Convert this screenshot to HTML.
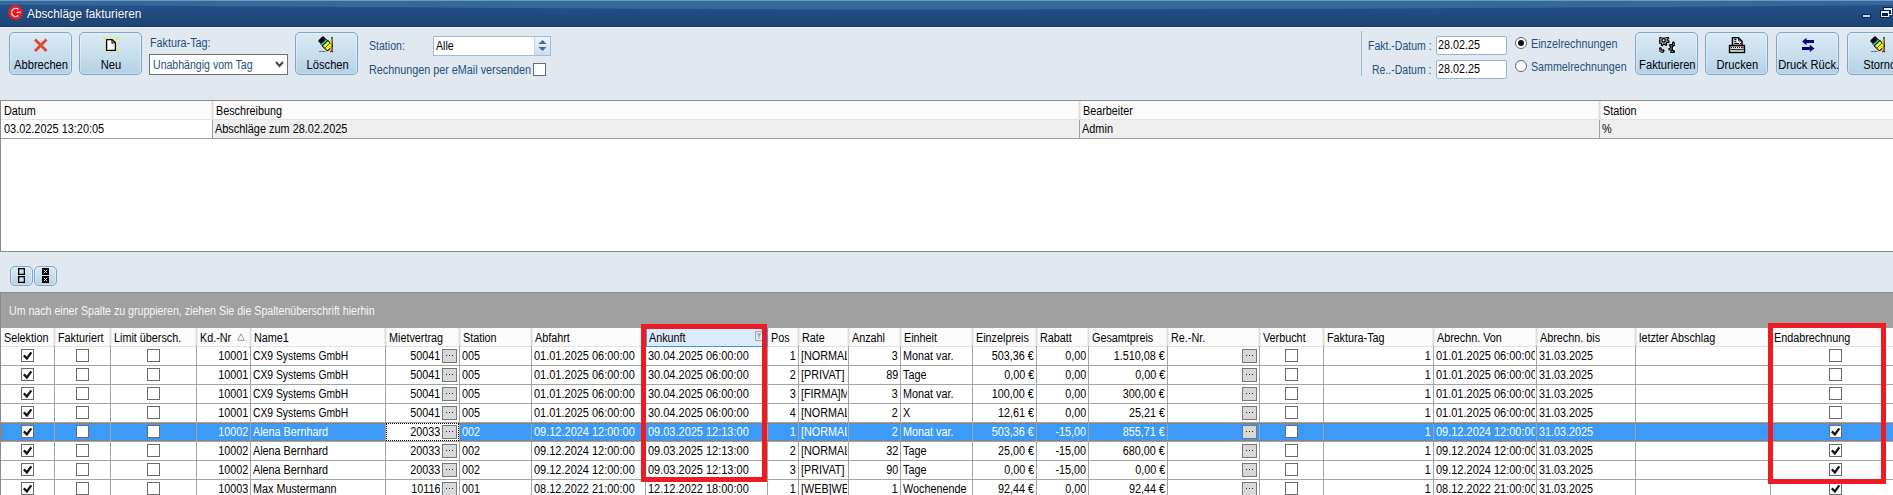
<!DOCTYPE html><html><head><meta charset="utf-8"><title>Abschläge fakturieren</title><style>
*{margin:0;padding:0;box-sizing:border-box}
html,body{width:1893px;height:495px;overflow:hidden;background:#e2e8f0;font-family:"Liberation Sans",sans-serif;font-size:12px;color:#000;position:relative}
.a{position:absolute}
.t{position:absolute;white-space:nowrap;line-height:14px;transform-origin:0 0}
.btn{position:absolute;border:1px solid #7ea6c8;border-radius:5px;background:linear-gradient(#dbeaf4,#c9dfed 50%,#b4d0e5);box-shadow:inset 0 0 0 1px rgba(255,255,255,0.35)}
.lbl{position:absolute;left:-9px;right:-11px;text-align:center;top:25px;line-height:14px;white-space:nowrap}
.lbl span{display:inline-block;transform:scaleX(0.93)}
.cb{position:absolute;width:13px;height:13px;border:1px solid #6b6b6b;background:#fff}
.cb svg{position:absolute;left:0;top:0}
.dots{position:absolute;width:15px;height:14px;border:1px solid #767676;background:#d8d8d8}
.dots:after{content:"";position:absolute;left:3px;top:5px;width:7px;height:1px;background:repeating-linear-gradient(90deg,#222 0 1px,transparent 1px 3px)}
.cell{position:absolute;overflow:hidden;white-space:nowrap;line-height:14px;height:19px;padding-top:3px}
.cell span{display:inline-block;transform:scaleX(0.9);transform-origin:0 0}
.cell.r{text-align:right}
.cell.r span{transform-origin:100% 0}
</style></head><body>
<svg class="a" style="left:0;top:0" width="1893" height="27" viewBox="0 0 1893 27"><defs><linearGradient id="tb" x1="0" y1="0" x2="0" y2="1"><stop offset="0" stop-color="#285592"/><stop offset="0.35" stop-color="#234e86"/><stop offset="0.93" stop-color="#1c4474"/><stop offset="1" stop-color="#143868"/></linearGradient></defs><rect width="1893" height="27" fill="url(#tb)"/><path d="M0 0 H1893 V5 C1600 7.5 1250 9.5 950 9.5 C650 9.5 350 6.5 0 5 Z" fill="#37689a"/><rect width="1893" height="1" fill="#6b9bc3"/></svg>
<div class="a" style="left:0;top:27px;width:1893px;height:1px;background:#eaf0f6"></div>
<svg class="a" style="left:0px;top:0px" width="24" height="24" viewBox="0 0 24 24"><circle cx="15.4" cy="12.4" r="7.4" fill="#e81c24"/><path d="M18.4 9.4 A4.1 4.1 0 1 0 18.4 15.6" fill="none" stroke="#fff" stroke-width="1.3"/><path d="M16.8 12.4 H20.6" stroke="#fff" stroke-width="1.2"/></svg>
<div class="t" style="left:27px;top:7px;color:#fff;font-size:12px;transform:scaleX(0.985);text-shadow:0 0 1px #0a2040">Abschläge fakturieren</div>
<svg class="a" style="left:1858px;top:4px" width="35" height="18" viewBox="0 0 35 18"><rect x="4" y="10" width="9" height="4" fill="#0a1e3c" opacity="0.7"/><rect x="5" y="11" width="7" height="2" fill="#bcdcf2"/><rect x="25" y="3" width="9" height="8" fill="#0a1e3c"/><rect x="26" y="4" width="8" height="7" fill="#d8ecfa"/><rect x="27" y="6" width="6" height="4" fill="#0a1a44"/><rect x="22" y="6" width="9" height="8" fill="#0a1e3c"/><rect x="23" y="7" width="8" height="6" fill="#e4f2fc"/><rect x="24" y="9" width="6" height="3" fill="#0a1a44"/></svg>
<div class="btn" style="left:9px;top:32px;width:63px;height:43px"><div class="lbl"><span>Abbrechen</span></div></div>
<div class="btn" style="left:79px;top:32px;width:63px;height:43px"><div class="lbl"><span>Neu</span></div></div>
<div class="btn" style="left:295px;top:32px;width:63px;height:43px"><div class="lbl"><span>Löschen</span></div></div>
<div class="btn" style="left:1635px;top:32px;width:63px;height:43px"><div class="lbl"><span>Fakturieren</span></div></div>
<div class="btn" style="left:1705px;top:32px;width:63px;height:43px"><div class="lbl"><span>Drucken</span></div></div>
<div class="btn" style="left:1776px;top:32px;width:63px;height:43px"><div class="lbl"><span>Druck Rück.</span></div></div>
<div class="btn" style="left:1847px;top:32px;width:63px;height:43px"><div class="lbl"><span>Storno</span></div></div>
<svg class="a" style="left:28px;top:34px" width="24" height="24" viewBox="0 0 24 24"><path d="M7 5.5 L18.5 17 M18.5 5.5 L7 17" stroke="#dc4a32" stroke-width="2.9"/></svg>
<svg class="a" style="left:97px;top:34px" width="24" height="24" viewBox="0 0 24 24"><g stroke="#f5ee00" stroke-width="1.1"><path d="M6 3 L8.5 5.5 M13.5 3 V5 M21.5 3 L18 6.5 M6 11.5 H8.5 M19.5 11 H22 M6.5 18 L9 16 M14 17.5 V19.5 M19.5 16 L22 18.5"/></g><path d="M9.6 5.6 H15.2 L18.4 8.8 V16.4 H9.6 Z" fill="#fff" stroke="#000" stroke-width="1.3" stroke-linejoin="round"/><path d="M15 5.8 V9 H18.2" fill="none" stroke="#000" stroke-width="1.1"/></svg>
<svg class="a" style="left:312px;top:34px" width="24" height="24" viewBox="0 0 24 24"><path d="M7 17.5 H13.5" stroke="#7a7a7a" stroke-width="1"/><rect x="14.5" y="17" width="1" height="1" fill="#999"/><rect x="21.5" y="17" width="1" height="1" fill="#999"/><g transform="translate(10.2 6.2) rotate(45)"><rect x="-2.6" y="-3.6" width="4.6" height="7.2" rx="1" fill="#000"/><rect x="2" y="-3.6" width="2.2" height="7.2" fill="#00e0f0" stroke="#000" stroke-width="0.6"/><path d="M4.2 -3.8 H9.5 Q11.5 -3.8 11.5 -1.5 V1.8 Q11.5 4 9.5 4 H4.2 Z" fill="#f6f200" stroke="#000" stroke-width="1"/><path d="M6 -2 H10 M6 0 H10.5 M6 2 H10" stroke="#fff" stroke-width="0.7" stroke-dasharray="0.8 0.8"/><path d="M7.5 -3.5 V3.5" stroke="#000" stroke-width="0.7"/></g><path d="M20 3 V17" stroke="#000" stroke-width="1.2"/><path d="M19 5 V15.5" stroke="#f6f200" stroke-width="1"/><rect x="18" y="16.8" width="3" height="1.5" fill="#f00010"/></svg>
<svg class="a" style="left:1864px;top:34px" width="24" height="24" viewBox="0 0 24 24"><path d="M7 17.5 H13.5" stroke="#7a7a7a" stroke-width="1"/><rect x="14.5" y="17" width="1" height="1" fill="#999"/><rect x="21.5" y="17" width="1" height="1" fill="#999"/><g transform="translate(10.2 6.2) rotate(45)"><rect x="-2.6" y="-3.6" width="4.6" height="7.2" rx="1" fill="#000"/><rect x="2" y="-3.6" width="2.2" height="7.2" fill="#00e0f0" stroke="#000" stroke-width="0.6"/><path d="M4.2 -3.8 H9.5 Q11.5 -3.8 11.5 -1.5 V1.8 Q11.5 4 9.5 4 H4.2 Z" fill="#f6f200" stroke="#000" stroke-width="1"/><path d="M6 -2 H10 M6 0 H10.5 M6 2 H10" stroke="#fff" stroke-width="0.7" stroke-dasharray="0.8 0.8"/><path d="M7.5 -3.5 V3.5" stroke="#000" stroke-width="0.7"/></g><path d="M20 3 V17" stroke="#000" stroke-width="1.2"/><path d="M19 5 V15.5" stroke="#f6f200" stroke-width="1"/><rect x="18" y="16.8" width="3" height="1.5" fill="#f00010"/></svg>
<svg class="a" style="left:1655px;top:34px" width="24" height="24" viewBox="0 0 24 24"><defs><clipPath id="gc"><rect x="4" y="3" width="16" height="16"/></clipPath></defs><g clip-path="url(#gc)"><polygon points="14.09,7.31 13.77,8.36 11.92,8.43 11.42,9.04 11.69,10.87 10.72,11.38 9.37,10.13 8.59,10.20 7.49,11.69 6.44,11.37 6.37,9.52 5.76,9.02 3.93,9.29 3.42,8.32 4.67,6.97 4.60,6.19 3.11,5.09 3.43,4.04 5.28,3.97 5.78,3.36 5.51,1.53 6.48,1.02 7.83,2.27 8.61,2.20 9.71,0.71 10.76,1.03 10.83,2.88 11.44,3.38 13.27,3.11 13.78,4.08 12.53,5.43 12.60,6.21" fill="#8c8c8c" stroke="#000" stroke-width="1.1"/><circle cx="8.6" cy="6.2" r="1.6" fill="#fff" stroke="#000" stroke-width="1.2"/><polygon points="26.57,14.84 26.36,15.94 24.34,16.20 23.93,16.89 24.67,18.78 23.80,19.49 22.09,18.39 21.33,18.66 20.68,20.58 19.56,20.57 18.95,18.63 18.20,18.34 16.46,19.40 15.62,18.67 16.40,16.79 16.01,16.09 14.00,15.78 13.82,14.68 15.62,13.74 15.77,12.95 14.43,11.42 15.00,10.46 16.99,10.91 17.61,10.40 17.57,8.37 18.62,8.00 19.86,9.61 20.66,9.62 21.94,8.04 22.98,8.43 22.89,10.47 23.49,10.99 25.49,10.60 26.03,11.57 24.66,13.07 24.79,13.86" fill="#8c8c8c" stroke="#000" stroke-width="1.1"/><circle cx="20.2" cy="14.2" r="3" fill="#fff" stroke="#000" stroke-width="1.4"/><polygon points="9.19,20.02 8.75,21.00 7.09,20.91 6.51,21.41 6.35,23.07 5.31,23.35 4.34,21.99 3.60,21.85 2.20,22.75 1.33,22.12 1.79,20.51 1.43,19.84 -0.15,19.31 -0.19,18.24 1.35,17.60 1.66,16.90 1.08,15.33 1.90,14.63 3.36,15.43 4.10,15.24 4.96,13.81 6.02,14.01 6.30,15.66 6.91,16.11 8.57,15.90 9.07,16.85 7.96,18.10 7.99,18.86" fill="#8c8c8c" stroke="#000" stroke-width="1.1"/><circle cx="4.6" cy="18.6" r="1.5" fill="#fff" stroke="#000" stroke-width="1"/></g></svg>
<svg class="a" style="left:1725px;top:34px" width="24" height="24" viewBox="0 0 24 24"><path d="M7.5 3.7 H13.5 L17 7.2 V11.5 H7.5 Z" fill="#fff" stroke="#000" stroke-width="1.5"/><path d="M13.5 4 V6.5 Q13.5 7 14 7 H16.5" fill="none" stroke="#000" stroke-width="0.9"/><rect x="9.2" y="5" width="2.2" height="1.3" fill="#000"/><rect x="9.2" y="7.2" width="2.2" height="1.1" fill="#000"/><rect x="9.2" y="9" width="5" height="1.1" fill="#000"/><rect x="15" y="9" width="1.1" height="1.1" fill="#000"/><rect x="4.6" y="11.6" width="14.8" height="6.8" fill="#fff" stroke="#000" stroke-width="1.6"/><path d="M6 13.5 H17" stroke="#000" stroke-width="1" stroke-dasharray="1 1"/><path d="M5.5 12.5 H17 M5.5 14.5 H17" stroke="#777" stroke-width="0.6" stroke-dasharray="1 1" stroke-dashoffset="1"/><circle cx="17.6" cy="13.6" r="0.9" fill="#f00"/><rect x="5.4" y="15" width="13.2" height="0.9" fill="#000"/><rect x="5.4" y="15.9" width="13.2" height="1.8" fill="#c4c4c4"/></svg>
<svg class="a" style="left:1796px;top:34px" width="24" height="24" viewBox="0 0 24 24"><path d="M6 7.5 L10.5 3.8 V6 H18 V9 H10.5 V11.2 Z" fill="#000080"/><path d="M18.5 14.5 L13.8 10.8 V13 H6 V16 H13.8 V18 Z" fill="#000080"/></svg>
<div class="t" style="left:150px;top:36px;color:#24507e;font-size:12px;transform:scaleX(0.9);">Faktura-Tag:</div>
<div class="a" style="left:149px;top:54px;width:139px;height:21px;border:1px solid #6f6f6f;background:#fff"></div>
<div class="t" style="left:153px;top:58px;color:#24507e;font-size:12px;transform:scaleX(0.88);">Unabhängig vom Tag</div>
<svg class="a" style="left:275px;top:61px" width="9" height="7" viewBox="0 0 9 7"><path d="M1 1 L4.5 5 L8 1" fill="none" stroke="#444" stroke-width="2"/></svg>
<div class="t" style="left:369px;top:39px;color:#24507e;font-size:12px;transform:scaleX(0.88);">Station:</div>
<div class="a" style="left:433px;top:36px;width:118px;height:20px;border:1px solid #9dbcd9;background:#fff"></div>
<div class="a" style="left:534px;top:37px;width:16px;height:18px;background:linear-gradient(#eef3f8,#cfdce8);border-left:1px solid #c8d6e4"></div>
<svg class="a" style="left:538px;top:39px" width="9" height="13" viewBox="0 0 9 13"><path d="M0.5 5 L4.5 1 L8.5 5 Z M0.5 8 L4.5 12 L8.5 8 Z" fill="#3c6da0"/></svg>
<div class="t" style="left:436px;top:39px;color:#000;font-size:12px;transform:scaleX(0.88);">Alle</div>
<div class="t" style="left:369px;top:63px;color:#24507e;font-size:12px;transform:scaleX(0.9);">Rechnungen per eMail versenden</div>
<div class="cb" style="left:533px;top:63px"></div>
<div class="a" style="left:1361px;top:31px;width:1px;height:45px;background:#a7b8cc"></div>
<div class="t" style="left:1368px;top:39px;color:#24507e;font-size:12px;transform:scaleX(0.875);">Fakt.-Datum :</div>
<div class="t" style="left:1372px;top:63px;color:#24507e;font-size:12px;transform:scaleX(0.875);">Re..-Datum :</div>
<div class="a" style="left:1436px;top:36px;width:71px;height:19px;border:1px solid #93b5d3;border-radius:2px;background:#fff"></div>
<div class="t" style="left:1438px;top:38px;color:#000;font-size:12px;transform:scaleX(0.9);">28.02.25</div>
<div class="a" style="left:1436px;top:60px;width:71px;height:19px;border:1px solid #93b5d3;border-radius:2px;background:#fff"></div>
<div class="t" style="left:1438px;top:62px;color:#000;font-size:12px;transform:scaleX(0.9);">28.02.25</div>
<div class="a" style="left:1515px;top:37px;width:12px;height:12px;border-radius:50%;border:1px solid #666;background:#fff"></div>
<div class="a" style="left:1518px;top:40px;width:6px;height:6px;border-radius:50%;background:#111"></div>
<div class="a" style="left:1515px;top:60px;width:12px;height:12px;border-radius:50%;border:1px solid #666;background:#fff"></div>
<div class="t" style="left:1531px;top:37px;color:#24507e;font-size:12px;transform:scaleX(0.9);">Einzelrechnungen</div>
<div class="t" style="left:1531px;top:60px;color:#24507e;font-size:12px;transform:scaleX(0.89);">Sammelrechnungen</div>
<div class="a" style="left:0;top:100px;width:1893px;height:152px;background:#fff;border-top:1px solid #8c8c8c;border-left:1px solid #8c8c8c;border-bottom:1px solid #8c8c8c"></div>
<div class="a" style="left:1px;top:101px;width:1892px;height:19px;background:#fbfbfb;border-bottom:1px solid #e2e2e2"></div>
<div class="a" style="left:1px;top:119px;width:1892px;height:20px;border-bottom:1px solid #a0a0a0"></div>
<div class="t" style="left:4px;top:104px;color:#000;font-size:12px;transform:scaleX(0.9);">Datum</div>
<div class="t" style="left:4px;top:122px;color:#000;font-size:12px;transform:scaleX(0.91);">03.02.2025 13:20:05</div>
<div class="a" style="left:211px;top:101px;width:3px;height:18px;background:linear-gradient(90deg,#f3f3f3,#dedede 50%,#f3f3f3)"></div>
<div class="a" style="left:213px;top:120px;width:866px;height:18px;background:#efefef"></div>
<div class="a" style="left:212px;top:120px;width:1px;height:18px;background:#a0a0a0"></div>
<div class="t" style="left:216px;top:104px;color:#000;font-size:12px;transform:scaleX(0.9);">Beschreibung</div>
<div class="t" style="left:215px;top:122px;color:#000;font-size:12px;transform:scaleX(0.91);">Abschläge zum 28.02.2025</div>
<div class="a" style="left:1078px;top:101px;width:3px;height:18px;background:linear-gradient(90deg,#f3f3f3,#dedede 50%,#f3f3f3)"></div>
<div class="a" style="left:1080px;top:120px;width:519px;height:18px;background:#efefef"></div>
<div class="a" style="left:1079px;top:120px;width:1px;height:18px;background:#a0a0a0"></div>
<div class="t" style="left:1083px;top:104px;color:#000;font-size:12px;transform:scaleX(0.9);">Bearbeiter</div>
<div class="t" style="left:1082px;top:122px;color:#000;font-size:12px;transform:scaleX(0.91);">Admin</div>
<div class="a" style="left:1598px;top:101px;width:3px;height:18px;background:linear-gradient(90deg,#f3f3f3,#dedede 50%,#f3f3f3)"></div>
<div class="a" style="left:1600px;top:120px;width:293px;height:18px;background:#efefef"></div>
<div class="a" style="left:1599px;top:120px;width:1px;height:18px;background:#a0a0a0"></div>
<div class="t" style="left:1603px;top:104px;color:#000;font-size:12px;transform:scaleX(0.9);">Station</div>
<div class="t" style="left:1602px;top:122px;color:#000;font-size:12px;transform:scaleX(0.91);">%</div>
<div class="btn" style="left:10px;top:266px;width:23px;height:20px;border-radius:5px"></div>
<svg class="a" style="left:18px;top:268px" width="7" height="7" viewBox="0 0 7 7"><rect x="0.65" y="0.65" width="5.7" height="5.7" fill="#d2e5f1" stroke="#000" stroke-width="1.3"/></svg>
<svg class="a" style="left:18px;top:276px" width="7" height="7" viewBox="0 0 7 7"><rect x="0.65" y="0.65" width="5.7" height="5.7" fill="#d2e5f1" stroke="#000" stroke-width="1.3"/></svg>
<div class="btn" style="left:34px;top:266px;width:23px;height:20px;border-radius:5px"></div>
<svg class="a" style="left:42px;top:268px" width="7" height="7" viewBox="0 0 7 7"><rect width="7" height="7" fill="#000"/><path d="M1.8 1.8 L5.2 5.2 M5.2 1.8 L1.8 5.2" stroke="#fff" stroke-width="0.9"/></svg>
<svg class="a" style="left:42px;top:276px" width="7" height="7" viewBox="0 0 7 7"><rect width="7" height="7" fill="#000"/><path d="M1.8 1.8 L5.2 5.2 M5.2 1.8 L1.8 5.2" stroke="#fff" stroke-width="0.9"/></svg>
<div class="a" style="left:0;top:292px;width:1893px;height:36px;background:#a0a0a0;border-top:1px solid #8a8a8a;border-left:1px solid #8a8a8a"></div>
<div class="t" style="left:9px;top:304px;color:#f6f6f6;font-size:12px;transform:scaleX(0.884);">Um nach einer Spalte zu gruppieren, ziehen Sie die Spaltenüberschrift hierhin</div>
<div class="a" style="left:0;top:328px;width:1893px;height:167px;background:#fff;border-left:1px solid #8a8a8a"></div>
<div class="a" style="left:1px;top:328px;width:1892px;height:19px;background:#fbfbfb;border-bottom:1px solid #e2e2e2"></div>
<div class="cell" style="left:4px;top:329px;width:49px;padding-top:2px"><span>Selektion</span></div>
<div class="a" style="left:53px;top:328px;width:3px;height:18px;background:linear-gradient(90deg,#f3f3f3,#dedede 50%,#f3f3f3)"></div>
<div class="cell" style="left:58px;top:329px;width:51px;padding-top:2px"><span>Fakturiert</span></div>
<div class="a" style="left:109px;top:328px;width:3px;height:18px;background:linear-gradient(90deg,#f3f3f3,#dedede 50%,#f3f3f3)"></div>
<div class="cell" style="left:114px;top:329px;width:81px;padding-top:2px"><span>Limit übersch.</span></div>
<div class="a" style="left:195px;top:328px;width:3px;height:18px;background:linear-gradient(90deg,#f3f3f3,#dedede 50%,#f3f3f3)"></div>
<div class="cell" style="left:200px;top:329px;width:49px;padding-top:2px"><span>Kd.-Nr</span></div>
<svg class="a" style="left:237px;top:333px" width="8" height="8" viewBox="0 0 8 8"><path d="M4 0.8 L7.3 7.3 H0.7 Z" fill="none" stroke="#9a9a9a" stroke-width="1"/></svg>
<div class="a" style="left:249px;top:328px;width:3px;height:18px;background:linear-gradient(90deg,#f3f3f3,#dedede 50%,#f3f3f3)"></div>
<div class="cell" style="left:254px;top:329px;width:130px;padding-top:2px"><span>Name1</span></div>
<div class="a" style="left:384px;top:328px;width:3px;height:18px;background:linear-gradient(90deg,#f3f3f3,#dedede 50%,#f3f3f3)"></div>
<div class="cell" style="left:389px;top:329px;width:69px;padding-top:2px"><span>Mietvertrag</span></div>
<div class="a" style="left:458px;top:328px;width:3px;height:18px;background:linear-gradient(90deg,#f3f3f3,#dedede 50%,#f3f3f3)"></div>
<div class="cell" style="left:463px;top:329px;width:67px;padding-top:2px"><span>Station</span></div>
<div class="a" style="left:530px;top:328px;width:3px;height:18px;background:linear-gradient(90deg,#f3f3f3,#dedede 50%,#f3f3f3)"></div>
<div class="cell" style="left:535px;top:329px;width:109px;padding-top:2px"><span>Abfahrt</span></div>
<div class="a" style="left:644px;top:328px;width:3px;height:18px;background:linear-gradient(90deg,#f3f3f3,#dedede 50%,#f3f3f3)"></div>
<div class="a" style="left:646px;top:328px;width:121px;height:19px;background:#dcebfc;border:1px solid #3a9ae6;border-top:none"></div>
<svg class="a" style="left:755px;top:331px" width="8" height="10" viewBox="0 0 8 10"><rect x="0.5" y="0.5" width="7" height="9" fill="none" stroke="#a8a8a8"/><path d="M2 2.5 H6.5 L4.5 5 V8 L3.5 7.5 V5 Z" fill="#9a9a9a"/></svg>
<div class="cell" style="left:649px;top:329px;width:117px;padding-top:2px"><span>Ankunft</span></div>
<div class="a" style="left:766px;top:328px;width:3px;height:18px;background:linear-gradient(90deg,#f3f3f3,#dedede 50%,#f3f3f3)"></div>
<div class="cell" style="left:771px;top:329px;width:26px;padding-top:2px"><span>Pos</span></div>
<div class="a" style="left:797px;top:328px;width:3px;height:18px;background:linear-gradient(90deg,#f3f3f3,#dedede 50%,#f3f3f3)"></div>
<div class="cell" style="left:802px;top:329px;width:45px;padding-top:2px"><span>Rate</span></div>
<div class="a" style="left:847px;top:328px;width:3px;height:18px;background:linear-gradient(90deg,#f3f3f3,#dedede 50%,#f3f3f3)"></div>
<div class="cell" style="left:852px;top:329px;width:47px;padding-top:2px"><span>Anzahl</span></div>
<div class="a" style="left:899px;top:328px;width:3px;height:18px;background:linear-gradient(90deg,#f3f3f3,#dedede 50%,#f3f3f3)"></div>
<div class="cell" style="left:904px;top:329px;width:67px;padding-top:2px"><span>Einheit</span></div>
<div class="a" style="left:971px;top:328px;width:3px;height:18px;background:linear-gradient(90deg,#f3f3f3,#dedede 50%,#f3f3f3)"></div>
<div class="cell" style="left:976px;top:329px;width:59px;padding-top:2px"><span>Einzelpreis</span></div>
<div class="a" style="left:1035px;top:328px;width:3px;height:18px;background:linear-gradient(90deg,#f3f3f3,#dedede 50%,#f3f3f3)"></div>
<div class="cell" style="left:1040px;top:329px;width:47px;padding-top:2px"><span>Rabatt</span></div>
<div class="a" style="left:1087px;top:328px;width:3px;height:18px;background:linear-gradient(90deg,#f3f3f3,#dedede 50%,#f3f3f3)"></div>
<div class="cell" style="left:1092px;top:329px;width:74px;padding-top:2px"><span>Gesamtpreis</span></div>
<div class="a" style="left:1166px;top:328px;width:3px;height:18px;background:linear-gradient(90deg,#f3f3f3,#dedede 50%,#f3f3f3)"></div>
<div class="cell" style="left:1171px;top:329px;width:87px;padding-top:2px"><span>Re.-Nr.</span></div>
<div class="a" style="left:1258px;top:328px;width:3px;height:18px;background:linear-gradient(90deg,#f3f3f3,#dedede 50%,#f3f3f3)"></div>
<div class="cell" style="left:1263px;top:329px;width:59px;padding-top:2px"><span>Verbucht</span></div>
<div class="a" style="left:1322px;top:328px;width:3px;height:18px;background:linear-gradient(90deg,#f3f3f3,#dedede 50%,#f3f3f3)"></div>
<div class="cell" style="left:1327px;top:329px;width:105px;padding-top:2px"><span>Faktura-Tag</span></div>
<div class="a" style="left:1432px;top:328px;width:3px;height:18px;background:linear-gradient(90deg,#f3f3f3,#dedede 50%,#f3f3f3)"></div>
<div class="cell" style="left:1437px;top:329px;width:98px;padding-top:2px"><span>Abrechn. Von</span></div>
<div class="a" style="left:1535px;top:328px;width:3px;height:18px;background:linear-gradient(90deg,#f3f3f3,#dedede 50%,#f3f3f3)"></div>
<div class="cell" style="left:1540px;top:329px;width:94px;padding-top:2px"><span>Abrechn. bis</span></div>
<div class="a" style="left:1634px;top:328px;width:3px;height:18px;background:linear-gradient(90deg,#f3f3f3,#dedede 50%,#f3f3f3)"></div>
<div class="cell" style="left:1639px;top:329px;width:130px;padding-top:2px"><span>letzter Abschlag</span></div>
<div class="a" style="left:1769px;top:328px;width:3px;height:18px;background:linear-gradient(90deg,#f3f3f3,#dedede 50%,#f3f3f3)"></div>
<div class="cell" style="left:1774px;top:329px;width:126px;padding-top:2px"><span>Endabrechnung</span></div>
<div class="a" style="left:767px;top:328px;width:1px;height:19px;background:#3a9ae6"></div>
<div class="a" style="left:1px;top:365px;width:1892px;height:1px;background:#a4a4a4"></div>
<div class="cb" style="left:21px;top:349px"><svg width="11" height="11" viewBox="0 0 11 11"><path d="M1.8 5.4 L4.9 8.4 L9.3 2.4" fill="none" stroke="#141414" stroke-width="2.3"/></svg></div>
<div class="a" style="left:54px;top:346px;width:1px;height:20px;background:#a4a4a4"></div>
<div class="cb" style="left:76px;top:349px"></div>
<div class="a" style="left:110px;top:346px;width:1px;height:20px;background:#a4a4a4"></div>
<div class="cb" style="left:147px;top:349px"></div>
<div class="a" style="left:196px;top:346px;width:1px;height:20px;background:#a4a4a4"></div>
<div class="cell r" style="left:197px;top:346px;width:51px;color:#000"><span>10001</span></div>
<div class="a" style="left:250px;top:346px;width:1px;height:20px;background:#a4a4a4"></div>
<div class="cell" style="left:253px;top:346px;width:131px;color:#000"><span style="transform:scaleX(0.86)">CX9 Systems GmbH</span></div>
<div class="a" style="left:385px;top:346px;width:1px;height:20px;background:#a4a4a4"></div>
<div class="cell r" style="left:386px;top:346px;width:54px;color:#000"><span>50041</span></div>
<div class="dots" style="left:442px;top:349px"></div>
<div class="a" style="left:459px;top:346px;width:1px;height:20px;background:#a4a4a4"></div>
<div class="cell" style="left:462px;top:346px;width:68px;color:#000"><span>005</span></div>
<div class="a" style="left:531px;top:346px;width:1px;height:20px;background:#a4a4a4"></div>
<div class="cell" style="left:534px;top:346px;width:110px;color:#000"><span style="transform:scaleX(0.915)">01.01.2025 06:00:00</span></div>
<div class="a" style="left:645px;top:346px;width:1px;height:20px;background:#a4a4a4"></div>
<div class="cell" style="left:648px;top:346px;width:118px;color:#000"><span style="transform:scaleX(0.915)">30.04.2025 06:00:00</span></div>
<div class="a" style="left:767px;top:346px;width:1px;height:20px;background:#a4a4a4"></div>
<div class="cell r" style="left:768px;top:346px;width:28px;color:#000"><span>1</span></div>
<div class="a" style="left:798px;top:346px;width:1px;height:20px;background:#a4a4a4"></div>
<div class="cell" style="left:801px;top:346px;width:46px;color:#000"><span>[NORMAL]</span></div>
<div class="a" style="left:848px;top:346px;width:1px;height:20px;background:#a4a4a4"></div>
<div class="cell r" style="left:849px;top:346px;width:49px;color:#000"><span>3</span></div>
<div class="a" style="left:900px;top:346px;width:1px;height:20px;background:#a4a4a4"></div>
<div class="cell" style="left:903px;top:346px;width:68px;color:#000"><span>Monat var.</span></div>
<div class="a" style="left:972px;top:346px;width:1px;height:20px;background:#a4a4a4"></div>
<div class="cell r" style="left:973px;top:346px;width:61px;color:#000"><span>503,36 €</span></div>
<div class="a" style="left:1036px;top:346px;width:1px;height:20px;background:#a4a4a4"></div>
<div class="cell r" style="left:1037px;top:346px;width:49px;color:#000"><span>0,00</span></div>
<div class="a" style="left:1088px;top:346px;width:1px;height:20px;background:#a4a4a4"></div>
<div class="cell r" style="left:1089px;top:346px;width:76px;color:#000"><span>1.510,08 €</span></div>
<div class="a" style="left:1167px;top:346px;width:1px;height:20px;background:#a4a4a4"></div>
<div class="dots" style="left:1242px;top:349px"></div>
<div class="a" style="left:1259px;top:346px;width:1px;height:20px;background:#a4a4a4"></div>
<div class="cb" style="left:1285px;top:349px"></div>
<div class="a" style="left:1323px;top:346px;width:1px;height:20px;background:#a4a4a4"></div>
<div class="cell r" style="left:1324px;top:346px;width:107px;color:#000"><span>1</span></div>
<div class="a" style="left:1433px;top:346px;width:1px;height:20px;background:#a4a4a4"></div>
<div class="cell" style="left:1436px;top:346px;width:99px;color:#000"><span style="transform:scaleX(0.915)">01.01.2025 06:00:00</span></div>
<div class="a" style="left:1536px;top:346px;width:1px;height:20px;background:#a4a4a4"></div>
<div class="cell" style="left:1539px;top:346px;width:95px;color:#000"><span>31.03.2025</span></div>
<div class="a" style="left:1635px;top:346px;width:1px;height:20px;background:#a4a4a4"></div>
<div class="cell" style="left:1638px;top:346px;width:131px;color:#000"><span></span></div>
<div class="a" style="left:1770px;top:346px;width:1px;height:20px;background:#a4a4a4"></div>
<div class="cb" style="left:1829px;top:349px"></div>
<div class="a" style="left:1px;top:384px;width:1892px;height:1px;background:#a4a4a4"></div>
<div class="cb" style="left:21px;top:368px"><svg width="11" height="11" viewBox="0 0 11 11"><path d="M1.8 5.4 L4.9 8.4 L9.3 2.4" fill="none" stroke="#141414" stroke-width="2.3"/></svg></div>
<div class="a" style="left:54px;top:365px;width:1px;height:20px;background:#a4a4a4"></div>
<div class="cb" style="left:76px;top:368px"></div>
<div class="a" style="left:110px;top:365px;width:1px;height:20px;background:#a4a4a4"></div>
<div class="cb" style="left:147px;top:368px"></div>
<div class="a" style="left:196px;top:365px;width:1px;height:20px;background:#a4a4a4"></div>
<div class="cell r" style="left:197px;top:365px;width:51px;color:#000"><span>10001</span></div>
<div class="a" style="left:250px;top:365px;width:1px;height:20px;background:#a4a4a4"></div>
<div class="cell" style="left:253px;top:365px;width:131px;color:#000"><span style="transform:scaleX(0.86)">CX9 Systems GmbH</span></div>
<div class="a" style="left:385px;top:365px;width:1px;height:20px;background:#a4a4a4"></div>
<div class="cell r" style="left:386px;top:365px;width:54px;color:#000"><span>50041</span></div>
<div class="dots" style="left:442px;top:368px"></div>
<div class="a" style="left:459px;top:365px;width:1px;height:20px;background:#a4a4a4"></div>
<div class="cell" style="left:462px;top:365px;width:68px;color:#000"><span>005</span></div>
<div class="a" style="left:531px;top:365px;width:1px;height:20px;background:#a4a4a4"></div>
<div class="cell" style="left:534px;top:365px;width:110px;color:#000"><span style="transform:scaleX(0.915)">01.01.2025 06:00:00</span></div>
<div class="a" style="left:645px;top:365px;width:1px;height:20px;background:#a4a4a4"></div>
<div class="cell" style="left:648px;top:365px;width:118px;color:#000"><span style="transform:scaleX(0.915)">30.04.2025 06:00:00</span></div>
<div class="a" style="left:767px;top:365px;width:1px;height:20px;background:#a4a4a4"></div>
<div class="cell r" style="left:768px;top:365px;width:28px;color:#000"><span>2</span></div>
<div class="a" style="left:798px;top:365px;width:1px;height:20px;background:#a4a4a4"></div>
<div class="cell" style="left:801px;top:365px;width:46px;color:#000"><span>[PRIVAT]</span></div>
<div class="a" style="left:848px;top:365px;width:1px;height:20px;background:#a4a4a4"></div>
<div class="cell r" style="left:849px;top:365px;width:49px;color:#000"><span>89</span></div>
<div class="a" style="left:900px;top:365px;width:1px;height:20px;background:#a4a4a4"></div>
<div class="cell" style="left:903px;top:365px;width:68px;color:#000"><span>Tage</span></div>
<div class="a" style="left:972px;top:365px;width:1px;height:20px;background:#a4a4a4"></div>
<div class="cell r" style="left:973px;top:365px;width:61px;color:#000"><span>0,00 €</span></div>
<div class="a" style="left:1036px;top:365px;width:1px;height:20px;background:#a4a4a4"></div>
<div class="cell r" style="left:1037px;top:365px;width:49px;color:#000"><span>0,00</span></div>
<div class="a" style="left:1088px;top:365px;width:1px;height:20px;background:#a4a4a4"></div>
<div class="cell r" style="left:1089px;top:365px;width:76px;color:#000"><span>0,00 €</span></div>
<div class="a" style="left:1167px;top:365px;width:1px;height:20px;background:#a4a4a4"></div>
<div class="dots" style="left:1242px;top:368px"></div>
<div class="a" style="left:1259px;top:365px;width:1px;height:20px;background:#a4a4a4"></div>
<div class="cb" style="left:1285px;top:368px"></div>
<div class="a" style="left:1323px;top:365px;width:1px;height:20px;background:#a4a4a4"></div>
<div class="cell r" style="left:1324px;top:365px;width:107px;color:#000"><span>1</span></div>
<div class="a" style="left:1433px;top:365px;width:1px;height:20px;background:#a4a4a4"></div>
<div class="cell" style="left:1436px;top:365px;width:99px;color:#000"><span style="transform:scaleX(0.915)">01.01.2025 06:00:00</span></div>
<div class="a" style="left:1536px;top:365px;width:1px;height:20px;background:#a4a4a4"></div>
<div class="cell" style="left:1539px;top:365px;width:95px;color:#000"><span>31.03.2025</span></div>
<div class="a" style="left:1635px;top:365px;width:1px;height:20px;background:#a4a4a4"></div>
<div class="cell" style="left:1638px;top:365px;width:131px;color:#000"><span></span></div>
<div class="a" style="left:1770px;top:365px;width:1px;height:20px;background:#a4a4a4"></div>
<div class="cb" style="left:1829px;top:368px"></div>
<div class="a" style="left:1px;top:403px;width:1892px;height:1px;background:#a4a4a4"></div>
<div class="cb" style="left:21px;top:387px"><svg width="11" height="11" viewBox="0 0 11 11"><path d="M1.8 5.4 L4.9 8.4 L9.3 2.4" fill="none" stroke="#141414" stroke-width="2.3"/></svg></div>
<div class="a" style="left:54px;top:384px;width:1px;height:20px;background:#a4a4a4"></div>
<div class="cb" style="left:76px;top:387px"></div>
<div class="a" style="left:110px;top:384px;width:1px;height:20px;background:#a4a4a4"></div>
<div class="cb" style="left:147px;top:387px"></div>
<div class="a" style="left:196px;top:384px;width:1px;height:20px;background:#a4a4a4"></div>
<div class="cell r" style="left:197px;top:384px;width:51px;color:#000"><span>10001</span></div>
<div class="a" style="left:250px;top:384px;width:1px;height:20px;background:#a4a4a4"></div>
<div class="cell" style="left:253px;top:384px;width:131px;color:#000"><span style="transform:scaleX(0.86)">CX9 Systems GmbH</span></div>
<div class="a" style="left:385px;top:384px;width:1px;height:20px;background:#a4a4a4"></div>
<div class="cell r" style="left:386px;top:384px;width:54px;color:#000"><span>50041</span></div>
<div class="dots" style="left:442px;top:387px"></div>
<div class="a" style="left:459px;top:384px;width:1px;height:20px;background:#a4a4a4"></div>
<div class="cell" style="left:462px;top:384px;width:68px;color:#000"><span>005</span></div>
<div class="a" style="left:531px;top:384px;width:1px;height:20px;background:#a4a4a4"></div>
<div class="cell" style="left:534px;top:384px;width:110px;color:#000"><span style="transform:scaleX(0.915)">01.01.2025 06:00:00</span></div>
<div class="a" style="left:645px;top:384px;width:1px;height:20px;background:#a4a4a4"></div>
<div class="cell" style="left:648px;top:384px;width:118px;color:#000"><span style="transform:scaleX(0.915)">30.04.2025 06:00:00</span></div>
<div class="a" style="left:767px;top:384px;width:1px;height:20px;background:#a4a4a4"></div>
<div class="cell r" style="left:768px;top:384px;width:28px;color:#000"><span>3</span></div>
<div class="a" style="left:798px;top:384px;width:1px;height:20px;background:#a4a4a4"></div>
<div class="cell" style="left:801px;top:384px;width:46px;color:#000"><span>[FIRMA]Monat</span></div>
<div class="a" style="left:848px;top:384px;width:1px;height:20px;background:#a4a4a4"></div>
<div class="cell r" style="left:849px;top:384px;width:49px;color:#000"><span>3</span></div>
<div class="a" style="left:900px;top:384px;width:1px;height:20px;background:#a4a4a4"></div>
<div class="cell" style="left:903px;top:384px;width:68px;color:#000"><span>Monat var.</span></div>
<div class="a" style="left:972px;top:384px;width:1px;height:20px;background:#a4a4a4"></div>
<div class="cell r" style="left:973px;top:384px;width:61px;color:#000"><span>100,00 €</span></div>
<div class="a" style="left:1036px;top:384px;width:1px;height:20px;background:#a4a4a4"></div>
<div class="cell r" style="left:1037px;top:384px;width:49px;color:#000"><span>0,00</span></div>
<div class="a" style="left:1088px;top:384px;width:1px;height:20px;background:#a4a4a4"></div>
<div class="cell r" style="left:1089px;top:384px;width:76px;color:#000"><span>300,00 €</span></div>
<div class="a" style="left:1167px;top:384px;width:1px;height:20px;background:#a4a4a4"></div>
<div class="dots" style="left:1242px;top:387px"></div>
<div class="a" style="left:1259px;top:384px;width:1px;height:20px;background:#a4a4a4"></div>
<div class="cb" style="left:1285px;top:387px"></div>
<div class="a" style="left:1323px;top:384px;width:1px;height:20px;background:#a4a4a4"></div>
<div class="cell r" style="left:1324px;top:384px;width:107px;color:#000"><span>1</span></div>
<div class="a" style="left:1433px;top:384px;width:1px;height:20px;background:#a4a4a4"></div>
<div class="cell" style="left:1436px;top:384px;width:99px;color:#000"><span style="transform:scaleX(0.915)">01.01.2025 06:00:00</span></div>
<div class="a" style="left:1536px;top:384px;width:1px;height:20px;background:#a4a4a4"></div>
<div class="cell" style="left:1539px;top:384px;width:95px;color:#000"><span>31.03.2025</span></div>
<div class="a" style="left:1635px;top:384px;width:1px;height:20px;background:#a4a4a4"></div>
<div class="cell" style="left:1638px;top:384px;width:131px;color:#000"><span></span></div>
<div class="a" style="left:1770px;top:384px;width:1px;height:20px;background:#a4a4a4"></div>
<div class="cb" style="left:1829px;top:387px"></div>
<div class="a" style="left:1px;top:422px;width:1892px;height:1px;background:#a4a4a4"></div>
<div class="cb" style="left:21px;top:406px"><svg width="11" height="11" viewBox="0 0 11 11"><path d="M1.8 5.4 L4.9 8.4 L9.3 2.4" fill="none" stroke="#141414" stroke-width="2.3"/></svg></div>
<div class="a" style="left:54px;top:403px;width:1px;height:20px;background:#a4a4a4"></div>
<div class="cb" style="left:76px;top:406px"></div>
<div class="a" style="left:110px;top:403px;width:1px;height:20px;background:#a4a4a4"></div>
<div class="cb" style="left:147px;top:406px"></div>
<div class="a" style="left:196px;top:403px;width:1px;height:20px;background:#a4a4a4"></div>
<div class="cell r" style="left:197px;top:403px;width:51px;color:#000"><span>10001</span></div>
<div class="a" style="left:250px;top:403px;width:1px;height:20px;background:#a4a4a4"></div>
<div class="cell" style="left:253px;top:403px;width:131px;color:#000"><span style="transform:scaleX(0.86)">CX9 Systems GmbH</span></div>
<div class="a" style="left:385px;top:403px;width:1px;height:20px;background:#a4a4a4"></div>
<div class="cell r" style="left:386px;top:403px;width:54px;color:#000"><span>50041</span></div>
<div class="dots" style="left:442px;top:406px"></div>
<div class="a" style="left:459px;top:403px;width:1px;height:20px;background:#a4a4a4"></div>
<div class="cell" style="left:462px;top:403px;width:68px;color:#000"><span>005</span></div>
<div class="a" style="left:531px;top:403px;width:1px;height:20px;background:#a4a4a4"></div>
<div class="cell" style="left:534px;top:403px;width:110px;color:#000"><span style="transform:scaleX(0.915)">01.01.2025 06:00:00</span></div>
<div class="a" style="left:645px;top:403px;width:1px;height:20px;background:#a4a4a4"></div>
<div class="cell" style="left:648px;top:403px;width:118px;color:#000"><span style="transform:scaleX(0.915)">30.04.2025 06:00:00</span></div>
<div class="a" style="left:767px;top:403px;width:1px;height:20px;background:#a4a4a4"></div>
<div class="cell r" style="left:768px;top:403px;width:28px;color:#000"><span>4</span></div>
<div class="a" style="left:798px;top:403px;width:1px;height:20px;background:#a4a4a4"></div>
<div class="cell" style="left:801px;top:403px;width:46px;color:#000"><span>[NORMAL]</span></div>
<div class="a" style="left:848px;top:403px;width:1px;height:20px;background:#a4a4a4"></div>
<div class="cell r" style="left:849px;top:403px;width:49px;color:#000"><span>2</span></div>
<div class="a" style="left:900px;top:403px;width:1px;height:20px;background:#a4a4a4"></div>
<div class="cell" style="left:903px;top:403px;width:68px;color:#000"><span>X</span></div>
<div class="a" style="left:972px;top:403px;width:1px;height:20px;background:#a4a4a4"></div>
<div class="cell r" style="left:973px;top:403px;width:61px;color:#000"><span>12,61 €</span></div>
<div class="a" style="left:1036px;top:403px;width:1px;height:20px;background:#a4a4a4"></div>
<div class="cell r" style="left:1037px;top:403px;width:49px;color:#000"><span>0,00</span></div>
<div class="a" style="left:1088px;top:403px;width:1px;height:20px;background:#a4a4a4"></div>
<div class="cell r" style="left:1089px;top:403px;width:76px;color:#000"><span>25,21 €</span></div>
<div class="a" style="left:1167px;top:403px;width:1px;height:20px;background:#a4a4a4"></div>
<div class="dots" style="left:1242px;top:406px"></div>
<div class="a" style="left:1259px;top:403px;width:1px;height:20px;background:#a4a4a4"></div>
<div class="cb" style="left:1285px;top:406px"></div>
<div class="a" style="left:1323px;top:403px;width:1px;height:20px;background:#a4a4a4"></div>
<div class="cell r" style="left:1324px;top:403px;width:107px;color:#000"><span>1</span></div>
<div class="a" style="left:1433px;top:403px;width:1px;height:20px;background:#a4a4a4"></div>
<div class="cell" style="left:1436px;top:403px;width:99px;color:#000"><span style="transform:scaleX(0.915)">01.01.2025 06:00:00</span></div>
<div class="a" style="left:1536px;top:403px;width:1px;height:20px;background:#a4a4a4"></div>
<div class="cell" style="left:1539px;top:403px;width:95px;color:#000"><span>31.03.2025</span></div>
<div class="a" style="left:1635px;top:403px;width:1px;height:20px;background:#a4a4a4"></div>
<div class="cell" style="left:1638px;top:403px;width:131px;color:#000"><span></span></div>
<div class="a" style="left:1770px;top:403px;width:1px;height:20px;background:#a4a4a4"></div>
<div class="cb" style="left:1829px;top:406px"></div>
<div class="a" style="left:1px;top:423px;width:1892px;height:18px;background:#3c9af8"></div>
<div class="a" style="left:1px;top:441px;width:1892px;height:1px;background:#a4a4a4"></div>
<div class="cb" style="left:21px;top:425px"><svg width="11" height="11" viewBox="0 0 11 11"><path d="M1.8 5.4 L4.9 8.4 L9.3 2.4" fill="none" stroke="#141414" stroke-width="2.3"/></svg></div>
<div class="a" style="left:54px;top:422px;width:1px;height:20px;background:#a4a4a4"></div>
<div class="cb" style="left:76px;top:425px"></div>
<div class="a" style="left:110px;top:422px;width:1px;height:20px;background:#a4a4a4"></div>
<div class="cb" style="left:147px;top:425px"></div>
<div class="a" style="left:196px;top:422px;width:1px;height:20px;background:#a4a4a4"></div>
<div class="cell r" style="left:197px;top:422px;width:51px;color:#fff"><span>10002</span></div>
<div class="a" style="left:250px;top:422px;width:1px;height:20px;background:#a4a4a4"></div>
<div class="cell" style="left:253px;top:422px;width:131px;color:#fff"><span>Alena Bernhard</span></div>
<div class="a" style="left:385px;top:422px;width:1px;height:20px;background:#a4a4a4"></div>
<div class="cell r" style="left:386px;top:422px;width:54px;color:#000"><span>20033</span></div>
<div class="dots" style="left:442px;top:425px"></div>
<div class="a" style="left:459px;top:422px;width:1px;height:20px;background:#a4a4a4"></div>
<div class="cell" style="left:462px;top:422px;width:68px;color:#fff"><span>002</span></div>
<div class="a" style="left:531px;top:422px;width:1px;height:20px;background:#a4a4a4"></div>
<div class="cell" style="left:534px;top:422px;width:110px;color:#fff"><span style="transform:scaleX(0.915)">09.12.2024 12:00:00</span></div>
<div class="a" style="left:645px;top:422px;width:1px;height:20px;background:#a4a4a4"></div>
<div class="cell" style="left:648px;top:422px;width:118px;color:#fff"><span style="transform:scaleX(0.915)">09.03.2025 12:13:00</span></div>
<div class="a" style="left:767px;top:422px;width:1px;height:20px;background:#a4a4a4"></div>
<div class="cell r" style="left:768px;top:422px;width:28px;color:#fff"><span>1</span></div>
<div class="a" style="left:798px;top:422px;width:1px;height:20px;background:#a4a4a4"></div>
<div class="cell" style="left:801px;top:422px;width:46px;color:#fff"><span>[NORMAL]</span></div>
<div class="a" style="left:848px;top:422px;width:1px;height:20px;background:#a4a4a4"></div>
<div class="cell r" style="left:849px;top:422px;width:49px;color:#fff"><span>2</span></div>
<div class="a" style="left:900px;top:422px;width:1px;height:20px;background:#a4a4a4"></div>
<div class="cell" style="left:903px;top:422px;width:68px;color:#fff"><span>Monat var.</span></div>
<div class="a" style="left:972px;top:422px;width:1px;height:20px;background:#a4a4a4"></div>
<div class="cell r" style="left:973px;top:422px;width:61px;color:#fff"><span>503,36 €</span></div>
<div class="a" style="left:1036px;top:422px;width:1px;height:20px;background:#a4a4a4"></div>
<div class="cell r" style="left:1037px;top:422px;width:49px;color:#fff"><span>-15,00</span></div>
<div class="a" style="left:1088px;top:422px;width:1px;height:20px;background:#a4a4a4"></div>
<div class="cell r" style="left:1089px;top:422px;width:76px;color:#fff"><span>855,71 €</span></div>
<div class="a" style="left:1167px;top:422px;width:1px;height:20px;background:#a4a4a4"></div>
<div class="dots" style="left:1242px;top:425px"></div>
<div class="a" style="left:1259px;top:422px;width:1px;height:20px;background:#a4a4a4"></div>
<div class="cb" style="left:1285px;top:425px"></div>
<div class="a" style="left:1323px;top:422px;width:1px;height:20px;background:#a4a4a4"></div>
<div class="cell r" style="left:1324px;top:422px;width:107px;color:#fff"><span>1</span></div>
<div class="a" style="left:1433px;top:422px;width:1px;height:20px;background:#a4a4a4"></div>
<div class="cell" style="left:1436px;top:422px;width:99px;color:#fff"><span style="transform:scaleX(0.915)">09.12.2024 12:00:00</span></div>
<div class="a" style="left:1536px;top:422px;width:1px;height:20px;background:#a4a4a4"></div>
<div class="cell" style="left:1539px;top:422px;width:95px;color:#fff"><span>31.03.2025</span></div>
<div class="a" style="left:1635px;top:422px;width:1px;height:20px;background:#a4a4a4"></div>
<div class="cell" style="left:1638px;top:422px;width:131px;color:#fff"><span></span></div>
<div class="a" style="left:1770px;top:422px;width:1px;height:20px;background:#a4a4a4"></div>
<div class="cb" style="left:1829px;top:425px"><svg width="11" height="11" viewBox="0 0 11 11"><path d="M1.8 5.4 L4.9 8.4 L9.3 2.4" fill="none" stroke="#141414" stroke-width="2.3"/></svg></div>
<div class="a" style="left:1px;top:423px;width:1892px;height:1px;background:repeating-linear-gradient(90deg,#d06a10 0 1px,transparent 1px 2px)"></div>
<div class="a" style="left:1px;top:440px;width:1892px;height:1px;background:repeating-linear-gradient(90deg,#d06a10 0 1px,transparent 1px 2px)"></div>
<div class="a" style="left:1px;top:423px;width:1px;height:18px;background:repeating-linear-gradient(#d06a10 0 1px,transparent 1px 2px)"></div>
<div class="a" style="left:386px;top:423px;width:73px;height:18px;background:#fff;border:1px dotted #000"></div>
<div class="cell r" style="left:386px;top:422px;width:54px;color:#000"><span>20033</span></div>
<div class="dots" style="left:442px;top:425px"></div>
<div class="a" style="left:1px;top:460px;width:1892px;height:1px;background:#a4a4a4"></div>
<div class="cb" style="left:21px;top:444px"><svg width="11" height="11" viewBox="0 0 11 11"><path d="M1.8 5.4 L4.9 8.4 L9.3 2.4" fill="none" stroke="#141414" stroke-width="2.3"/></svg></div>
<div class="a" style="left:54px;top:441px;width:1px;height:20px;background:#a4a4a4"></div>
<div class="cb" style="left:76px;top:444px"></div>
<div class="a" style="left:110px;top:441px;width:1px;height:20px;background:#a4a4a4"></div>
<div class="cb" style="left:147px;top:444px"></div>
<div class="a" style="left:196px;top:441px;width:1px;height:20px;background:#a4a4a4"></div>
<div class="cell r" style="left:197px;top:441px;width:51px;color:#000"><span>10002</span></div>
<div class="a" style="left:250px;top:441px;width:1px;height:20px;background:#a4a4a4"></div>
<div class="cell" style="left:253px;top:441px;width:131px;color:#000"><span>Alena Bernhard</span></div>
<div class="a" style="left:385px;top:441px;width:1px;height:20px;background:#a4a4a4"></div>
<div class="cell r" style="left:386px;top:441px;width:54px;color:#000"><span>20033</span></div>
<div class="dots" style="left:442px;top:444px"></div>
<div class="a" style="left:459px;top:441px;width:1px;height:20px;background:#a4a4a4"></div>
<div class="cell" style="left:462px;top:441px;width:68px;color:#000"><span>002</span></div>
<div class="a" style="left:531px;top:441px;width:1px;height:20px;background:#a4a4a4"></div>
<div class="cell" style="left:534px;top:441px;width:110px;color:#000"><span style="transform:scaleX(0.915)">09.12.2024 12:00:00</span></div>
<div class="a" style="left:645px;top:441px;width:1px;height:20px;background:#a4a4a4"></div>
<div class="cell" style="left:648px;top:441px;width:118px;color:#000"><span style="transform:scaleX(0.915)">09.03.2025 12:13:00</span></div>
<div class="a" style="left:767px;top:441px;width:1px;height:20px;background:#a4a4a4"></div>
<div class="cell r" style="left:768px;top:441px;width:28px;color:#000"><span>2</span></div>
<div class="a" style="left:798px;top:441px;width:1px;height:20px;background:#a4a4a4"></div>
<div class="cell" style="left:801px;top:441px;width:46px;color:#000"><span>[NORMAL]</span></div>
<div class="a" style="left:848px;top:441px;width:1px;height:20px;background:#a4a4a4"></div>
<div class="cell r" style="left:849px;top:441px;width:49px;color:#000"><span>32</span></div>
<div class="a" style="left:900px;top:441px;width:1px;height:20px;background:#a4a4a4"></div>
<div class="cell" style="left:903px;top:441px;width:68px;color:#000"><span>Tage</span></div>
<div class="a" style="left:972px;top:441px;width:1px;height:20px;background:#a4a4a4"></div>
<div class="cell r" style="left:973px;top:441px;width:61px;color:#000"><span>25,00 €</span></div>
<div class="a" style="left:1036px;top:441px;width:1px;height:20px;background:#a4a4a4"></div>
<div class="cell r" style="left:1037px;top:441px;width:49px;color:#000"><span>-15,00</span></div>
<div class="a" style="left:1088px;top:441px;width:1px;height:20px;background:#a4a4a4"></div>
<div class="cell r" style="left:1089px;top:441px;width:76px;color:#000"><span>680,00 €</span></div>
<div class="a" style="left:1167px;top:441px;width:1px;height:20px;background:#a4a4a4"></div>
<div class="dots" style="left:1242px;top:444px"></div>
<div class="a" style="left:1259px;top:441px;width:1px;height:20px;background:#a4a4a4"></div>
<div class="cb" style="left:1285px;top:444px"></div>
<div class="a" style="left:1323px;top:441px;width:1px;height:20px;background:#a4a4a4"></div>
<div class="cell r" style="left:1324px;top:441px;width:107px;color:#000"><span>1</span></div>
<div class="a" style="left:1433px;top:441px;width:1px;height:20px;background:#a4a4a4"></div>
<div class="cell" style="left:1436px;top:441px;width:99px;color:#000"><span style="transform:scaleX(0.915)">09.12.2024 12:00:00</span></div>
<div class="a" style="left:1536px;top:441px;width:1px;height:20px;background:#a4a4a4"></div>
<div class="cell" style="left:1539px;top:441px;width:95px;color:#000"><span>31.03.2025</span></div>
<div class="a" style="left:1635px;top:441px;width:1px;height:20px;background:#a4a4a4"></div>
<div class="cell" style="left:1638px;top:441px;width:131px;color:#000"><span></span></div>
<div class="a" style="left:1770px;top:441px;width:1px;height:20px;background:#a4a4a4"></div>
<div class="cb" style="left:1829px;top:444px"><svg width="11" height="11" viewBox="0 0 11 11"><path d="M1.8 5.4 L4.9 8.4 L9.3 2.4" fill="none" stroke="#141414" stroke-width="2.3"/></svg></div>
<div class="a" style="left:1px;top:479px;width:1892px;height:1px;background:#a4a4a4"></div>
<div class="cb" style="left:21px;top:463px"><svg width="11" height="11" viewBox="0 0 11 11"><path d="M1.8 5.4 L4.9 8.4 L9.3 2.4" fill="none" stroke="#141414" stroke-width="2.3"/></svg></div>
<div class="a" style="left:54px;top:460px;width:1px;height:20px;background:#a4a4a4"></div>
<div class="cb" style="left:76px;top:463px"></div>
<div class="a" style="left:110px;top:460px;width:1px;height:20px;background:#a4a4a4"></div>
<div class="cb" style="left:147px;top:463px"></div>
<div class="a" style="left:196px;top:460px;width:1px;height:20px;background:#a4a4a4"></div>
<div class="cell r" style="left:197px;top:460px;width:51px;color:#000"><span>10002</span></div>
<div class="a" style="left:250px;top:460px;width:1px;height:20px;background:#a4a4a4"></div>
<div class="cell" style="left:253px;top:460px;width:131px;color:#000"><span>Alena Bernhard</span></div>
<div class="a" style="left:385px;top:460px;width:1px;height:20px;background:#a4a4a4"></div>
<div class="cell r" style="left:386px;top:460px;width:54px;color:#000"><span>20033</span></div>
<div class="dots" style="left:442px;top:463px"></div>
<div class="a" style="left:459px;top:460px;width:1px;height:20px;background:#a4a4a4"></div>
<div class="cell" style="left:462px;top:460px;width:68px;color:#000"><span>002</span></div>
<div class="a" style="left:531px;top:460px;width:1px;height:20px;background:#a4a4a4"></div>
<div class="cell" style="left:534px;top:460px;width:110px;color:#000"><span style="transform:scaleX(0.915)">09.12.2024 12:00:00</span></div>
<div class="a" style="left:645px;top:460px;width:1px;height:20px;background:#a4a4a4"></div>
<div class="cell" style="left:648px;top:460px;width:118px;color:#000"><span style="transform:scaleX(0.915)">09.03.2025 12:13:00</span></div>
<div class="a" style="left:767px;top:460px;width:1px;height:20px;background:#a4a4a4"></div>
<div class="cell r" style="left:768px;top:460px;width:28px;color:#000"><span>3</span></div>
<div class="a" style="left:798px;top:460px;width:1px;height:20px;background:#a4a4a4"></div>
<div class="cell" style="left:801px;top:460px;width:46px;color:#000"><span>[PRIVAT]</span></div>
<div class="a" style="left:848px;top:460px;width:1px;height:20px;background:#a4a4a4"></div>
<div class="cell r" style="left:849px;top:460px;width:49px;color:#000"><span>90</span></div>
<div class="a" style="left:900px;top:460px;width:1px;height:20px;background:#a4a4a4"></div>
<div class="cell" style="left:903px;top:460px;width:68px;color:#000"><span>Tage</span></div>
<div class="a" style="left:972px;top:460px;width:1px;height:20px;background:#a4a4a4"></div>
<div class="cell r" style="left:973px;top:460px;width:61px;color:#000"><span>0,00 €</span></div>
<div class="a" style="left:1036px;top:460px;width:1px;height:20px;background:#a4a4a4"></div>
<div class="cell r" style="left:1037px;top:460px;width:49px;color:#000"><span>-15,00</span></div>
<div class="a" style="left:1088px;top:460px;width:1px;height:20px;background:#a4a4a4"></div>
<div class="cell r" style="left:1089px;top:460px;width:76px;color:#000"><span>0,00 €</span></div>
<div class="a" style="left:1167px;top:460px;width:1px;height:20px;background:#a4a4a4"></div>
<div class="dots" style="left:1242px;top:463px"></div>
<div class="a" style="left:1259px;top:460px;width:1px;height:20px;background:#a4a4a4"></div>
<div class="cb" style="left:1285px;top:463px"></div>
<div class="a" style="left:1323px;top:460px;width:1px;height:20px;background:#a4a4a4"></div>
<div class="cell r" style="left:1324px;top:460px;width:107px;color:#000"><span>1</span></div>
<div class="a" style="left:1433px;top:460px;width:1px;height:20px;background:#a4a4a4"></div>
<div class="cell" style="left:1436px;top:460px;width:99px;color:#000"><span style="transform:scaleX(0.915)">09.12.2024 12:00:00</span></div>
<div class="a" style="left:1536px;top:460px;width:1px;height:20px;background:#a4a4a4"></div>
<div class="cell" style="left:1539px;top:460px;width:95px;color:#000"><span>31.03.2025</span></div>
<div class="a" style="left:1635px;top:460px;width:1px;height:20px;background:#a4a4a4"></div>
<div class="cell" style="left:1638px;top:460px;width:131px;color:#000"><span></span></div>
<div class="a" style="left:1770px;top:460px;width:1px;height:20px;background:#a4a4a4"></div>
<div class="cb" style="left:1829px;top:463px"><svg width="11" height="11" viewBox="0 0 11 11"><path d="M1.8 5.4 L4.9 8.4 L9.3 2.4" fill="none" stroke="#141414" stroke-width="2.3"/></svg></div>
<div class="a" style="left:1px;top:498px;width:1892px;height:1px;background:#a4a4a4"></div>
<div class="cb" style="left:21px;top:482px"><svg width="11" height="11" viewBox="0 0 11 11"><path d="M1.8 5.4 L4.9 8.4 L9.3 2.4" fill="none" stroke="#141414" stroke-width="2.3"/></svg></div>
<div class="a" style="left:54px;top:479px;width:1px;height:20px;background:#a4a4a4"></div>
<div class="cb" style="left:76px;top:482px"></div>
<div class="a" style="left:110px;top:479px;width:1px;height:20px;background:#a4a4a4"></div>
<div class="cb" style="left:147px;top:482px"></div>
<div class="a" style="left:196px;top:479px;width:1px;height:20px;background:#a4a4a4"></div>
<div class="cell r" style="left:197px;top:479px;width:51px;color:#000"><span>10003</span></div>
<div class="a" style="left:250px;top:479px;width:1px;height:20px;background:#a4a4a4"></div>
<div class="cell" style="left:253px;top:479px;width:131px;color:#000"><span>Max Mustermann</span></div>
<div class="a" style="left:385px;top:479px;width:1px;height:20px;background:#a4a4a4"></div>
<div class="cell r" style="left:386px;top:479px;width:54px;color:#000"><span>10116</span></div>
<div class="dots" style="left:442px;top:482px"></div>
<div class="a" style="left:459px;top:479px;width:1px;height:20px;background:#a4a4a4"></div>
<div class="cell" style="left:462px;top:479px;width:68px;color:#000"><span>001</span></div>
<div class="a" style="left:531px;top:479px;width:1px;height:20px;background:#a4a4a4"></div>
<div class="cell" style="left:534px;top:479px;width:110px;color:#000"><span style="transform:scaleX(0.915)">08.12.2022 21:00:00</span></div>
<div class="a" style="left:645px;top:479px;width:1px;height:20px;background:#a4a4a4"></div>
<div class="cell" style="left:648px;top:479px;width:118px;color:#000"><span style="transform:scaleX(0.915)">12.12.2022 18:00:00</span></div>
<div class="a" style="left:767px;top:479px;width:1px;height:20px;background:#a4a4a4"></div>
<div class="cell r" style="left:768px;top:479px;width:28px;color:#000"><span>1</span></div>
<div class="a" style="left:798px;top:479px;width:1px;height:20px;background:#a4a4a4"></div>
<div class="cell" style="left:801px;top:479px;width:46px;color:#000"><span>[WEB]WEEKEND</span></div>
<div class="a" style="left:848px;top:479px;width:1px;height:20px;background:#a4a4a4"></div>
<div class="cell r" style="left:849px;top:479px;width:49px;color:#000"><span>1</span></div>
<div class="a" style="left:900px;top:479px;width:1px;height:20px;background:#a4a4a4"></div>
<div class="cell" style="left:903px;top:479px;width:68px;color:#000"><span>Wochenende</span></div>
<div class="a" style="left:972px;top:479px;width:1px;height:20px;background:#a4a4a4"></div>
<div class="cell r" style="left:973px;top:479px;width:61px;color:#000"><span>92,44 €</span></div>
<div class="a" style="left:1036px;top:479px;width:1px;height:20px;background:#a4a4a4"></div>
<div class="cell r" style="left:1037px;top:479px;width:49px;color:#000"><span>0,00</span></div>
<div class="a" style="left:1088px;top:479px;width:1px;height:20px;background:#a4a4a4"></div>
<div class="cell r" style="left:1089px;top:479px;width:76px;color:#000"><span>92,44 €</span></div>
<div class="a" style="left:1167px;top:479px;width:1px;height:20px;background:#a4a4a4"></div>
<div class="dots" style="left:1242px;top:482px"></div>
<div class="a" style="left:1259px;top:479px;width:1px;height:20px;background:#a4a4a4"></div>
<div class="cb" style="left:1285px;top:482px"></div>
<div class="a" style="left:1323px;top:479px;width:1px;height:20px;background:#a4a4a4"></div>
<div class="cell r" style="left:1324px;top:479px;width:107px;color:#000"><span>1</span></div>
<div class="a" style="left:1433px;top:479px;width:1px;height:20px;background:#a4a4a4"></div>
<div class="cell" style="left:1436px;top:479px;width:99px;color:#000"><span style="transform:scaleX(0.915)">08.12.2022 21:00:00</span></div>
<div class="a" style="left:1536px;top:479px;width:1px;height:20px;background:#a4a4a4"></div>
<div class="cell" style="left:1539px;top:479px;width:95px;color:#000"><span>31.03.2025</span></div>
<div class="a" style="left:1635px;top:479px;width:1px;height:20px;background:#a4a4a4"></div>
<div class="cell" style="left:1638px;top:479px;width:131px;color:#000"><span></span></div>
<div class="a" style="left:1770px;top:479px;width:1px;height:20px;background:#a4a4a4"></div>
<div class="cb" style="left:1829px;top:482px"><svg width="11" height="11" viewBox="0 0 11 11"><path d="M1.8 5.4 L4.9 8.4 L9.3 2.4" fill="none" stroke="#141414" stroke-width="2.3"/></svg></div>
<div class="a" style="left:641px;top:324px;width:126px;height:158px;border:5px solid #ed1c24"></div>
<div class="a" style="left:1768px;top:323px;width:118px;height:161px;border:5px solid #ed1c24"></div>
</body></html>
